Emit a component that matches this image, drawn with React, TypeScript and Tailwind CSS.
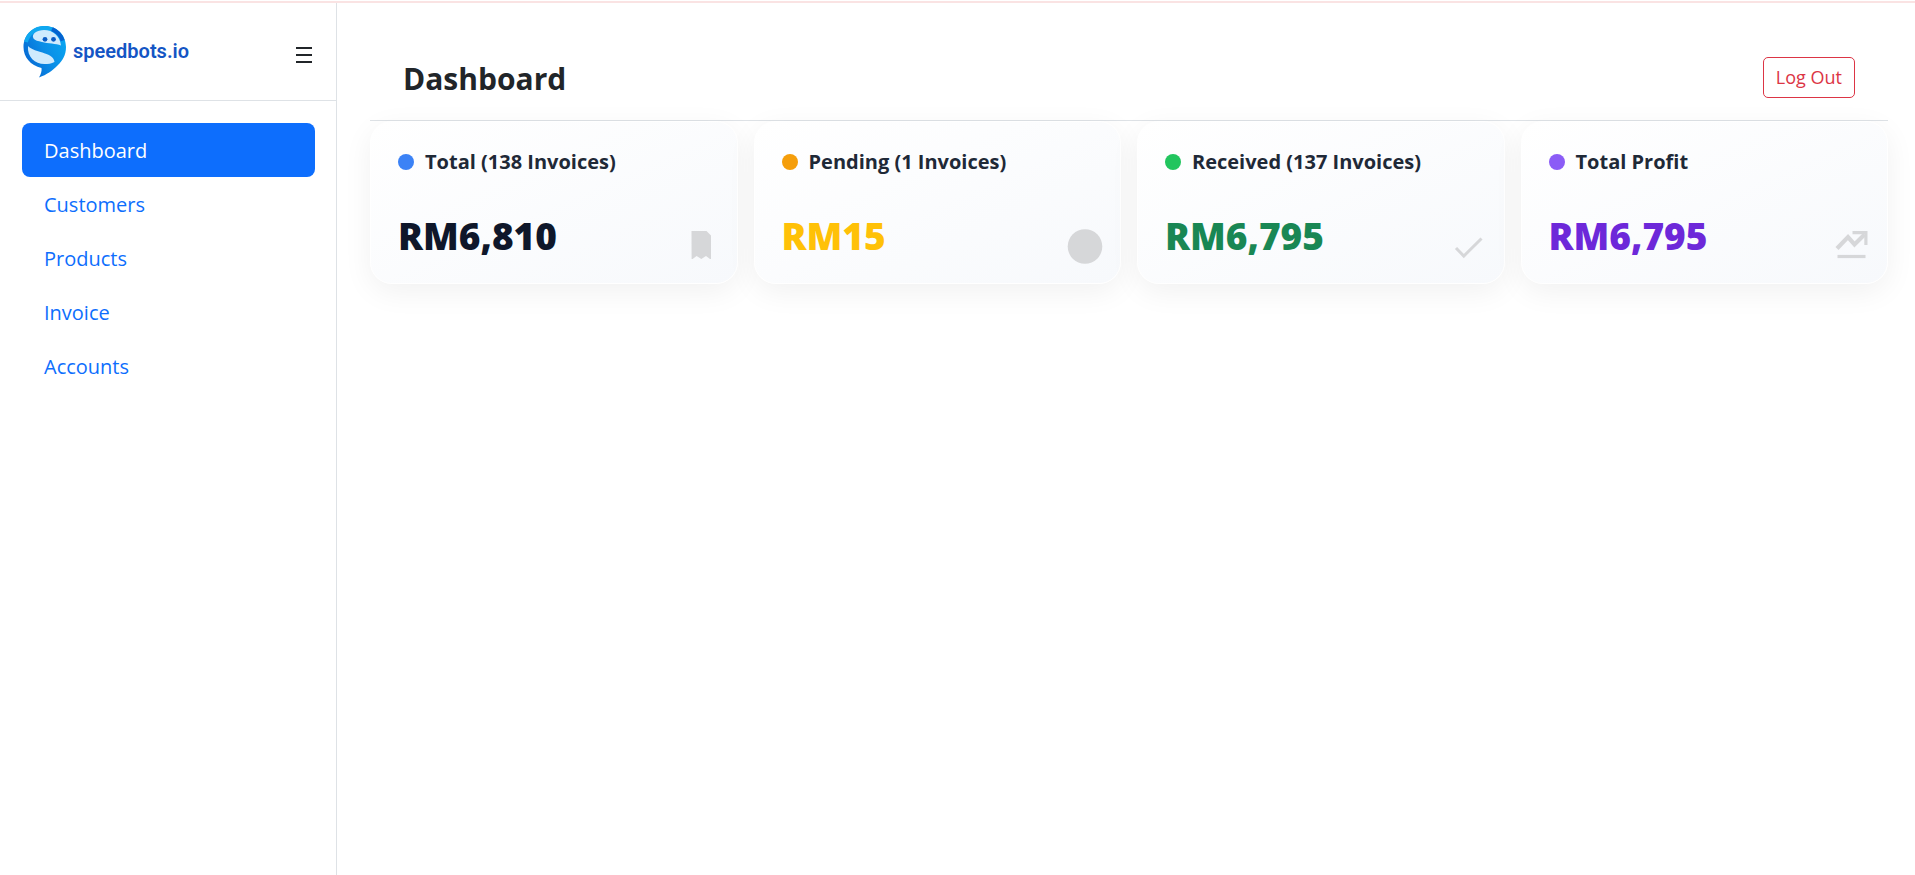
import React, { useState } from 'react';

const navItems = ['Dashboard', 'Customers', 'Products', 'Invoice', 'Accounts'];

const ReceiptIcon = () => (
  <svg viewBox="0 0 44 44" className="size-11 fill-current" aria-hidden="true">
    <path d="M15.500 9h15l4.500 4.500V37h-1l-4-3-4.700 3-4.700-3-4 3h-1z" />
  </svg>
);

const CircleIcon = () => (
  <svg viewBox="0 0 44 44" className="size-11 fill-current" aria-hidden="true">
    <circle cx="26" cy="24.500" r="17.300" />
  </svg>
);

const CheckIcon = () => (
  <svg viewBox="0 0 44 44" className="size-11" fill="none" stroke="currentColor" strokeWidth="3" aria-hidden="true">
    <path d="M13 26l7.800 8L38.500 16.500" />
  </svg>
);

const TrendIcon = () => (
  <svg viewBox="0 0 44 44" className="size-11" fill="none" stroke="currentColor" aria-hidden="true">
    <path strokeWidth="4.200" d="M11 26.500L22 15l6.500 7.500L38.500 12.500" />
    <path strokeWidth="3.200" d="M26.500 10.600h13.400V23" />
    <path strokeWidth="3.200" d="M11.500 34.500h28" />
  </svg>
);

const cards = [
  { title: 'Total (138 Invoices)', amount: 'RM6,810', dot: 'bg-[#3b82f6]', color: 'text-[#0f172a]', Icon: ReceiptIcon },
  { title: 'Pending (1 Invoices)', amount: 'RM15', dot: 'bg-[#f59e0b]', color: 'text-[#ffc107]', Icon: CircleIcon },
  { title: 'Received (137 Invoices)', amount: 'RM6,795', dot: 'bg-[#22c55e]', color: 'text-[#198754]', Icon: CheckIcon },
  { title: 'Total Profit', amount: 'RM6,795', dot: 'bg-[#8b5cf6]', color: 'text-[#6d28d9]', Icon: TrendIcon },
];

const Logo: React.FC = () => (
  <a href="#" className="flex items-center gap-[6px] text-[#1455c4]">
    <svg viewBox="0 0 44 54" className="h-[54px] w-11" aria-hidden="true">
      <defs>
        <linearGradient id="ring" x1="1" y1="0.200" x2="0" y2="0.800">
          <stop offset="0" stopColor="#08a8f2" />
          <stop offset="0.500" stopColor="#0a8ce6" />
          <stop offset="1" stopColor="#0562cf" />
        </linearGradient>
      </defs>
      <path fill="url(#ring)" d="M22 1C10 1 .5 10 .5 22c0 10 7 18.500 18 21 .5 3-.5 6-2.500 9.500 8-3 13-6.500 18.500-12C39.500 36 43 30 43 22 43 10 34 1 22 1z" />
      <path fill="none" stroke="#10a8f0" strokeWidth="4" d="M3 17C5 9 12 3 21 3c3 0 5 .5 7.500 1.300" />
      <path fill="none" stroke="#0562cf" strokeWidth="4" d="M29 4.200c5 2 9 6.500 10.700 11.500" />
      <path fill="#cfeafd" d="M10.500 13.500C8 9 14 5 21 5c9 0 16 6 17 15.500-5-2-13-2-19-3.500-4-1-7-1.500-8.500-3.500z" />
      <path fill="#cfeafd" d="M5 21c3 3.500 10 5 17 7.500 6 2 9 4.500 9.500 8.500-3 1.700-6.500 2-10 2C12 39 4 32 5 21z" />
      <circle cx="22" cy="14.300" r="2.400" fill="#0b5bc4" />
      <circle cx="30.500" cy="14.300" r="2.400" fill="#0b5bc4" />
    </svg>
    <span className="pb-[2px] font-[Roboto,sans-serif] text-xl leading-none font-semibold">speedbots.io</span>
  </a>
);

const App: React.FC = () => {
  const [active, setActive] = useState('Dashboard');

  return (
    <div className="flex min-h-screen flex-col bg-white font-['Open_Sans','Noto_Sans',sans-serif] text-[#212529]">
      <div className="h-[3px] border-b-2 border-[#fae3e3] bg-white" />
      <div className="flex flex-1">
        <aside className="w-[337px] shrink-0 border-r border-[#dee2e6]">
          <div className="flex h-[98px] items-center justify-between border-b border-[#dee2e6] pr-6 pl-[23px]">
            <Logo />
            <button type="button" aria-label="Toggle menu" className="pt-[6px]">
              <svg viewBox="0 0 16 18" className="h-[18px] w-4" stroke="#212529" strokeWidth="2" aria-hidden="true">
                <path d="M0 2h16M0 9h16M0 16h16" />
              </svg>
            </button>
          </div>
          <nav className="flex flex-col py-[22px] pr-[21px] pl-[22px]">
            {navItems.map((item) => (
              <a
                key={item}
                href="#"
                onClick={() => setActive(item)}
                className={`rounded-lg px-[22px] pt-3 pb-[10px] text-xl leading-8 ${
                  active === item ? 'bg-[#0d6efd] text-white' : 'text-[#0d6efd]'
                }`}
              >
                {item}
              </a>
            ))}
          </nav>
        </aside>

        <main className="min-w-0 flex-1 pt-[32px] pr-[27px] pl-[33px]">
          <header className="flex items-center justify-between border-b border-[#dee2e6] px-[33px] py-[22px]">
            <h1 className="pt-[2px] text-3xl leading-9 font-bold">Dashboard</h1>
            <button type="button" className="rounded-[5px] border border-[#dc3545] px-3 py-1 text-lg leading-[31px] text-[#dc3545]">
              Log Out
            </button>
          </header>

          <section className="grid grid-cols-4 gap-4">
            {cards.map(({ title, amount, dot, color, Icon }) => (
              <div
                key={title}
                className="rounded-[22px] border border-white bg-linear-to-br from-white to-[#f7f9fc] pt-6 pr-[17px] pb-[17px] pl-[27px] shadow-[0_8px_30px_rgba(0,0,0,0.06)]"
              >
                <div className="flex items-center gap-[11px]">
                  <span className={`size-4 rounded-full ${dot}`} />
                  <h2 className="text-xl leading-8 font-bold text-[#1f2937]">{title}</h2>
                </div>
                <div className="mt-9 flex items-end justify-between">
                  <p className={`pb-2 text-[37px] leading-11 font-extrabold ${color}`}>{amount}</p>
                  <span className="text-[#d6d7d9]">
                    <Icon />
                  </span>
                </div>
              </div>
            ))}
          </section>
        </main>
      </div>
    </div>
  );
};

export default App;
